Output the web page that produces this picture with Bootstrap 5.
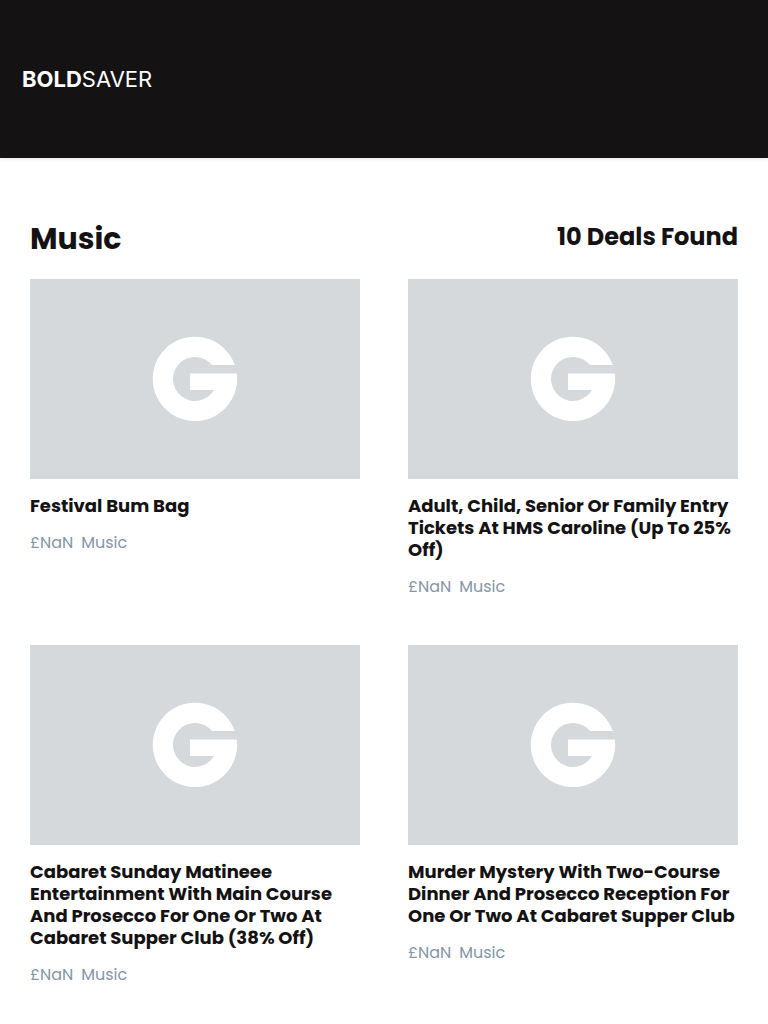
<!DOCTYPE html>
<html lang="en">
<head>
<meta charset="utf-8">
<meta name="viewport" content="width=device-width, initial-scale=1">
<title>Music deals - BoldSaver</title>
<link href="https://cdn.jsdelivr.net/npm/bootstrap@5.3.0/dist/css/bootstrap.min.css" rel="stylesheet">
<style>
body { font-family: Poppins, Inter, "Liberation Sans", sans-serif; color: #141213; background: #fff; }
.site-header { background: #141213; min-height: 158px; padding: 0 22px; box-shadow: 0 1px 4px rgba(0, 0, 0, .1); }
.brand { font-family: Inter, "Liberation Sans", sans-serif; font-size: 22px; line-height: 32px; color: #fff; font-weight: 400; }
.brand-bold { font-weight: 700; }
.page { padding: 60px 30px 24px; }
.page-title { font-size: 30px; line-height: 42px; font-weight: 700; }
.deal-count { font-size: 24px; line-height: 38px; font-weight: 700; }
.listing-head { margin-bottom: 19px; }
.deals { --bs-gutter-y: 46px; }
.deal-image { height: 200px; background: #d5d9dc; }
.deal-title { font-size: 18px; line-height: 22px; font-weight: 700; margin: 16px 0 14px; }
.deal-meta { font-size: 16px; line-height: 24px; color: #8496a5; }
</style>
</head>
<body>
<header class="site-header d-flex align-items-center">
  <a href="#" class="brand text-decoration-none"><span class="brand-bold">BOLD</span>SAVER</a>
</header>
<svg class="d-none" aria-hidden="true">
  <symbol id="g-mark" viewBox="-43 -43 86 86">
    <path fill="#fff" d="M39.8-14A42.2 42.2 0 1 0 41.8-5.5H-5V11H19A22 22 0 1 1 17-14Z"/>
  </symbol>
</svg>
<main class="page">
  <div class="listing-head d-flex justify-content-between align-items-start">
    <h1 class="page-title mb-0">Music</h1>
    <p class="deal-count mb-0">10 Deals Found</p>
  </div>
  <div class="row row-cols-1 row-cols-sm-2 gx-5 deals">
    <article class="col">
      <div class="deal-image d-flex align-items-center justify-content-center"><svg width="86" height="86" aria-hidden="true"><use href="#g-mark"/></svg></div>
      <h2 class="deal-title">Festival Bum Bag</h2>
      <div class="deal-meta d-flex gap-2"><span>£NaN</span><span>Music</span></div>
    </article>
    <article class="col">
      <div class="deal-image d-flex align-items-center justify-content-center"><svg width="86" height="86" aria-hidden="true"><use href="#g-mark"/></svg></div>
      <h2 class="deal-title">Adult, Child, Senior Or Family Entry Tickets At HMS Caroline (Up To 25% Off)</h2>
      <div class="deal-meta d-flex gap-2"><span>£NaN</span><span>Music</span></div>
    </article>
    <article class="col">
      <div class="deal-image d-flex align-items-center justify-content-center"><svg width="86" height="86" aria-hidden="true"><use href="#g-mark"/></svg></div>
      <h2 class="deal-title">Cabaret Sunday Matineee Entertainment With Main Course And Prosecco For One Or Two At Cabaret Supper Club (38% Off)</h2>
      <div class="deal-meta d-flex gap-2"><span>£NaN</span><span>Music</span></div>
    </article>
    <article class="col">
      <div class="deal-image d-flex align-items-center justify-content-center"><svg width="86" height="86" aria-hidden="true"><use href="#g-mark"/></svg></div>
      <h2 class="deal-title">Murder Mystery With Two-Course Dinner And Prosecco Reception For One Or Two At Cabaret Supper Club</h2>
      <div class="deal-meta d-flex gap-2"><span>£NaN</span><span>Music</span></div>
    </article>
  </div>
</main>
<script src="https://cdn.jsdelivr.net/npm/bootstrap@5.3.0/dist/js/bootstrap.bundle.min.js"></script>
</body>
</html>
